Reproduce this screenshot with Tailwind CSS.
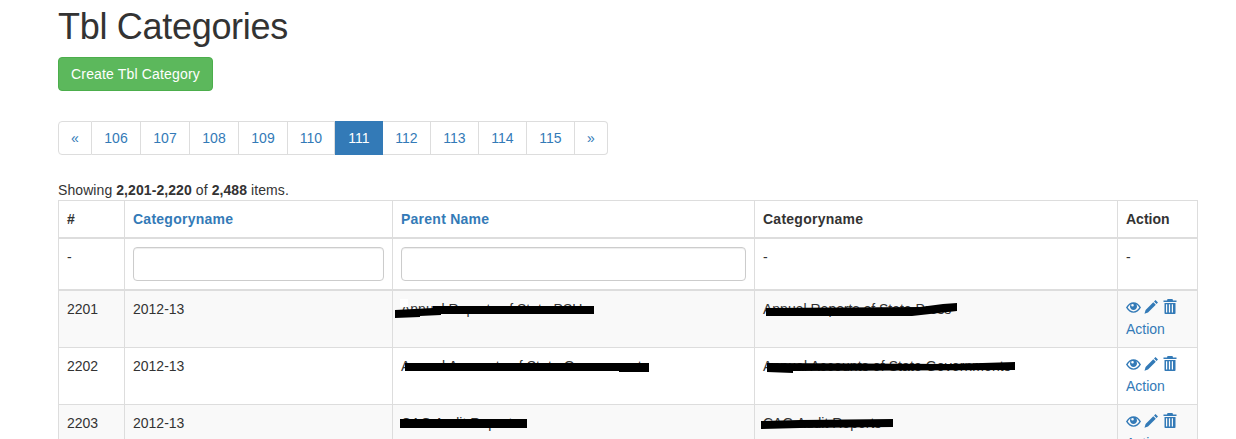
<!DOCTYPE html>
<html lang="en">
<head>
    <meta charset="UTF-8">
    <title>Tbl Categories</title>
    <script src="https://cdn.jsdelivr.net/npm/@tailwindcss/browser@4"></script>
</head>
<body class="bg-white text-[#333] text-[14px] leading-[20px] font-['Liberation_Sans',Arial,sans-serif]">
<div class="relative h-[439px] overflow-hidden">
    <div class="ml-[43px] w-[1170px] px-[15px]">
        <h1 class="pt-[7px] mb-[10px] text-[36px] leading-[40px] font-normal tracking-[-0.3px]">Tbl Categories</h1>
        <a href="#" class="inline-block w-[155px] h-[34px] py-[6px] text-center tracking-[0.16px] text-white bg-[#5cb85c] border border-[#4cae4c] rounded">Create Tbl Category</a>

        <ul class="flex mt-[30px] text-[#337ab7] text-center">
            <li class="w-[34px] h-[34px] py-[6px] border border-[#ddd] rounded-l">«</li>
            <li class="w-[49px] h-[34px] py-[6px] border-y border-r border-[#ddd]">106</li>
            <li class="w-[49px] h-[34px] py-[6px] border-y border-r border-[#ddd]">107</li>
            <li class="w-[49px] h-[34px] py-[6px] border-y border-r border-[#ddd]">108</li>
            <li class="w-[49px] h-[34px] py-[6px] border-y border-r border-[#ddd]">109</li>
            <li class="w-[47px] h-[34px] py-[6px] border-y border-r border-[#ddd]">110</li>
            <li class="w-[48px] h-[34px] py-[6px] text-white bg-[#337ab7] border-y border-[#337ab7]">111</li>
            <li class="w-[48px] h-[34px] py-[6px] border-y border-r border-[#ddd]">112</li>
            <li class="w-[48px] h-[34px] py-[6px] border-y border-r border-[#ddd]">113</li>
            <li class="w-[48px] h-[34px] py-[6px] border-y border-r border-[#ddd]">114</li>
            <li class="w-[48px] h-[34px] py-[6px] border-y border-r border-[#ddd]">115</li>
            <li class="w-[33px] h-[34px] py-[6px] border-y border-r border-[#ddd] rounded-r">»</li>
        </ul>

        <div class="mt-[25px] tracking-[0.08px]">Showing <b>2,201-2,220</b> of <b>2,488</b> items.</div>

        <table class="w-[1139px] table-fixed border-collapse">
            <colgroup>
                <col class="w-[66px]">
                <col class="w-[268px]">
                <col class="w-[362px]">
                <col class="w-[363px]">
                <col class="w-[80px]">
            </colgroup>
            <thead>
                <tr class="text-left">
                    <th class="p-2 border border-b-2 border-[#ddd]">#</th>
                    <th class="p-2 border border-b-2 border-[#ddd] text-[#337ab7] tracking-[0.25px]">Categoryname</th>
                    <th class="p-2 border border-b-2 border-[#ddd] text-[#337ab7] tracking-[0.25px]">Parent Name</th>
                    <th class="p-2 border border-b-2 border-[#ddd] tracking-[0.25px]">Categoryname</th>
                    <th class="p-2 border border-b-2 border-[#ddd]">Action</th>
                </tr>
                <tr class="text-left font-normal">
                    <td class="p-2 align-top border border-b-2 border-[#ddd]">-</td>
                    <td class="p-2 align-top border border-b-2 border-[#ddd]"><input type="text" class="block w-full h-[34px] px-3 border border-[#ccc] rounded shadow-[inset_0_1px_1px_rgba(0,0,0,0.075)]"></td>
                    <td class="p-2 align-top border border-b-2 border-[#ddd]"><input type="text" class="block w-full h-[34px] px-3 border border-[#ccc] rounded shadow-[inset_0_1px_1px_rgba(0,0,0,0.075)]"></td>
                    <td class="p-2 align-top border border-b-2 border-[#ddd]">-</td>
                    <td class="p-2 align-top border border-b-2 border-[#ddd]">-</td>
                </tr>
            </thead>
            <tbody>
                <tr class="bg-[#f9f9f9]">
                    <td class="p-2 align-top border border-[#ddd]">2201</td>
                    <td class="p-2 align-top border border-[#ddd]">2012-13</td>
                    <td class="p-2 align-top border border-[#ddd]">Annual Reports of State PSU</td>
                    <td class="p-2 align-top border border-[#ddd]">Annual Reports of State Press</td>
                    <td class="p-2 align-top border border-[#ddd] text-[#337ab7]">
                        <div class="flex h-5 gap-1">
                            <svg class="w-[15px] h-[15px] fill-current" viewBox="0 0 15 15"><path fill-rule="evenodd" d="M0 8.500C2 5 4.700 3.200 7.500 3.200S13 5 15 8.500c-2 3.500-4.700 5.300-7.500 5.300S2 12 0 8.500Zm1.700 0c1.300 2.300 3.500 3.900 5.800 3.900s4.500-1.600 5.800-3.900c-.9-1.500-2-2.600-3.200-3.300.6.700.9 1.500.9 2.400 0 1.900-1.600 3.500-3.500 3.500S4 9.500 4 7.600c0-.9.300-1.700.9-2.400-1.200.7-2.300 1.800-3.200 3.300ZM6.500 5a1.300 1.300 0 1 0 0 2.600 1.300 1.300 0 0 0 0-2.600Z"/></svg>
                            <svg class="w-[14px] h-[15px] -ml-[1px] fill-current" viewBox="0 0 14 15"><path d="M11.500 1 14 3.500l-1.500 1.500L10 2.500 11.500 1ZM9.300 3.200l2.500 2.500-7.800 7.800-3.500 1.200 1.100-3.600 7.700-7.900Z"/></svg>
                            <svg class="w-[14px] h-[15px] ml-[1px] fill-current" viewBox="0 0 14 15"><path fill-rule="evenodd" d="M4.500 0h5l.5 1.500h3.500V3H.5V1.500H4L4.500 0ZM1.500 4h11v10.200a.8.8 0 0 1-.8.8H2.300a.8.8 0 0 1-.8-.8V4Zm1.500 1.200V13.500h1.200V5.200H3Zm2.900 0V13.500h1.200V5.200H5.900Zm2.900 0V13.500H10V5.200H8.800Z"/></svg>
                        </div>
                        <div>Action</div>
                    </td>
                </tr>
                <tr>
                    <td class="p-2 align-top border border-[#ddd]">2202</td>
                    <td class="p-2 align-top border border-[#ddd]">2012-13</td>
                    <td class="p-2 align-top border border-[#ddd] tracking-[0.1px]">Annual Accounts of State Governments</td>
                    <td class="p-2 align-top border border-[#ddd] tracking-[0.1px]">Annual Accounts of State Governments</td>
                    <td class="p-2 align-top border border-[#ddd] text-[#337ab7]">
                        <div class="flex h-5 gap-1">
                            <svg class="w-[15px] h-[15px] fill-current" viewBox="0 0 15 15"><path fill-rule="evenodd" d="M0 8.500C2 5 4.700 3.200 7.500 3.200S13 5 15 8.500c-2 3.500-4.700 5.300-7.500 5.300S2 12 0 8.500Zm1.700 0c1.300 2.300 3.500 3.900 5.800 3.900s4.500-1.600 5.800-3.900c-.9-1.500-2-2.600-3.200-3.300.6.700.9 1.500.9 2.400 0 1.900-1.600 3.500-3.500 3.500S4 9.500 4 7.600c0-.9.300-1.700.9-2.400-1.200.7-2.300 1.800-3.200 3.300ZM6.500 5a1.300 1.300 0 1 0 0 2.600 1.300 1.300 0 0 0 0-2.600Z"/></svg>
                            <svg class="w-[14px] h-[15px] -ml-[1px] fill-current" viewBox="0 0 14 15"><path d="M11.500 1 14 3.500l-1.500 1.500L10 2.500 11.500 1ZM9.300 3.200l2.500 2.500-7.800 7.800-3.500 1.200 1.100-3.600 7.700-7.900Z"/></svg>
                            <svg class="w-[14px] h-[15px] ml-[1px] fill-current" viewBox="0 0 14 15"><path fill-rule="evenodd" d="M4.500 0h5l.5 1.500h3.500V3H.5V1.500H4L4.500 0ZM1.500 4h11v10.200a.8.8 0 0 1-.8.8H2.300a.8.8 0 0 1-.8-.8V4Zm1.500 1.200V13.500h1.200V5.200H3Zm2.900 0V13.500h1.200V5.200H5.900Zm2.900 0V13.500H10V5.200H8.800Z"/></svg>
                        </div>
                        <div>Action</div>
                    </td>
                </tr>
                <tr class="bg-[#f9f9f9]">
                    <td class="p-2 align-top border border-[#ddd]">2203</td>
                    <td class="p-2 align-top border border-[#ddd]">2012-13</td>
                    <td class="p-2 align-top border border-[#ddd]">CAG Audit Reports</td>
                    <td class="p-2 align-top border border-[#ddd]">CAG Audit Reports</td>
                    <td class="p-2 align-top border border-[#ddd] text-[#337ab7]">
                        <div class="flex h-5 gap-1">
                            <svg class="w-[15px] h-[15px] fill-current" viewBox="0 0 15 15"><path fill-rule="evenodd" d="M0 8.500C2 5 4.700 3.200 7.500 3.200S13 5 15 8.500c-2 3.500-4.700 5.300-7.500 5.300S2 12 0 8.500Zm1.700 0c1.300 2.300 3.500 3.900 5.800 3.900s4.500-1.600 5.800-3.900c-.9-1.500-2-2.600-3.200-3.300.6.700.9 1.500.9 2.400 0 1.900-1.600 3.500-3.500 3.500S4 9.500 4 7.600c0-.9.300-1.700.9-2.400-1.200.7-2.300 1.800-3.200 3.300ZM6.500 5a1.300 1.300 0 1 0 0 2.600 1.300 1.300 0 0 0 0-2.600Z"/></svg>
                            <svg class="w-[14px] h-[15px] -ml-[1px] fill-current" viewBox="0 0 14 15"><path d="M11.500 1 14 3.500l-1.500 1.500L10 2.500 11.500 1ZM9.300 3.200l2.500 2.500-7.800 7.800-3.500 1.200 1.100-3.600 7.700-7.900Z"/></svg>
                            <svg class="w-[14px] h-[15px] ml-[1px] fill-current" viewBox="0 0 14 15"><path fill-rule="evenodd" d="M4.500 0h5l.5 1.500h3.500V3H.5V1.500H4L4.500 0ZM1.500 4h11v10.200a.8.8 0 0 1-.8.8H2.300a.8.8 0 0 1-.8-.8V4Zm1.500 1.200V13.500h1.200V5.200H3Zm2.900 0V13.500h1.200V5.200H5.900Zm2.900 0V13.500H10V5.200H8.800Z"/></svg>
                        </div>
                        <div>Action</div>
                    </td>
                </tr>
            </tbody>
        </table>
    </div>

    <!-- hand drawn redaction marks sit on top of the table -->
    <svg class="absolute left-0 top-0 w-[1236px] h-[439px]" viewBox="0 0 1236 439">
        <rect x="400" y="299" width="8" height="8" fill="#fff"/>
        <polygon points="395,310 433,308 433,306 594,306 594,314 441,314 441,315 420,316 420,317 395,318"/>
        <polygon points="405,363 649,363 649,372 619,372 619,371 405,371"/>
        <polygon points="400,419 527,419 527,428 400,428"/>
        <polygon points="766,308 920,307 943,304 957,303 957,311 930,314 912,316 766,316"/>
        <polygon points="767,363 950,364 1015,362 1015,370 793,371 793,373 767,372"/>
        <polygon points="761,421 800,420 893,419 893,427 800,428 761,429"/>
    </svg>
</div>
</body>
</html>
